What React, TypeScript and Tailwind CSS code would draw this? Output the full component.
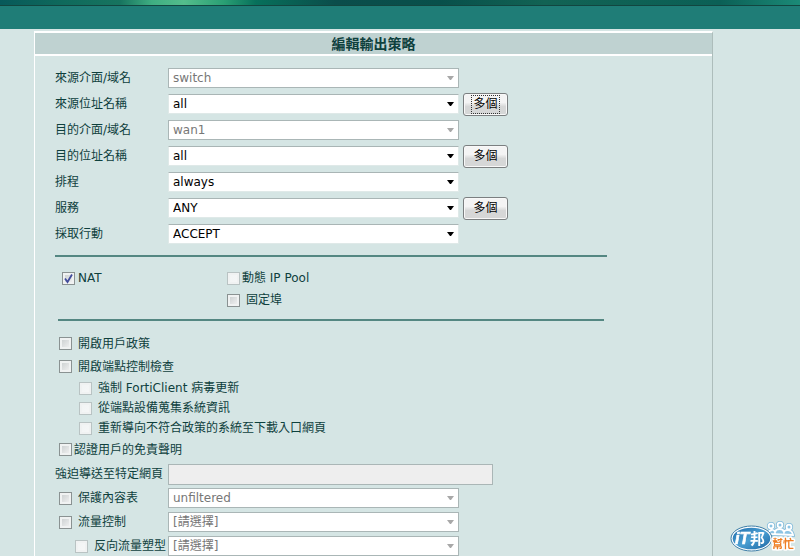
import { useId, useState, type ReactNode } from 'react'

type FieldProps = { label: string; value: string; disabled?: boolean; more?: boolean; focused?: boolean }

const FIELDS: FieldProps[] = [
  { label: '來源介面/域名', value: 'switch', disabled: true },
  { label: '來源位址名稱', value: 'all', more: true, focused: true },
  { label: '目的介面/域名', value: 'wan1', disabled: true },
  { label: '目的位址名稱', value: 'all', more: true },
  { label: '排程', value: 'always' },
  { label: '服務', value: 'ANY', more: true },
  { label: '採取行動', value: 'ACCEPT' },
]

const ENDPOINT_OPTIONS = ['強制 FortiClient 病毒更新', '從端點設備蒐集系統資訊', '重新導向不符合政策的系統至下載入口網頁']

function Select({ id, label, value, disabled }: { id?: string; label?: string; value: string; disabled?: boolean }) {
  return (
    <div className="relative w-[291px] shrink-0">
      <select
        id={id}
        aria-label={label}
        disabled={disabled}
        className="block h-5 w-full appearance-none border border-[#dfe9e8] border-t-[#a9b5b5] bg-white pl-1 leading-4 text-black opacity-100 disabled:border-[#aab6b6] disabled:text-[#777777]"
      >
        <option>{value}</option>
      </select>
      <svg
        viewBox="0 0 7 4"
        className={`pointer-events-none absolute top-2 right-[5px] h-1 w-[7px] ${disabled ? 'text-[#a8a8a8]' : 'text-black'}`}
      >
        <path d="M0 0h7L4 4H3z" fill="currentColor" />
      </svg>
    </div>
  )
}

function Field({ label, value, disabled, more, focused }: FieldProps) {
  const id = useId()
  return (
    <div className="flex h-[26px] items-center">
      <label htmlFor={id} className="w-[113px] shrink-0">{label}</label>
      <Select id={id} value={value} disabled={disabled} />
      {more && (
        <button
          type="button"
          className="ml-1 flex h-[23px] w-[45px] items-center justify-center rounded-[3px] border border-[#7b7f80] bg-linear-to-b from-[#f4f4f4] from-40% to-[#d6d7d7] to-60% text-black shadow-[inset_0_0_0_1px_#f8f8f8]"
        >
          <span className={focused ? 'outline outline-dotted outline-[#333333] h-[17px] px-px leading-4' : 'leading-4'}>多個</span>
        </button>
      )}
    </div>
  )
}

function Check({ children, defaultChecked = false, disabled, gap = 'gap-[6px]' }: {
  children: ReactNode; defaultChecked?: boolean; disabled?: boolean; gap?: string
}) {
  const [on, setOn] = useState(defaultChecked)
  return (
    <label className={`flex items-center whitespace-nowrap ${gap}`}>
      <span className="relative size-[13px] shrink-0">
        <input
          type="checkbox"
          checked={on}
          disabled={disabled}
          onChange={e => setOn(e.target.checked)}
          className="block size-[13px] appearance-none border border-[#8a9292] bg-linear-to-br from-[#c6cbcc] to-[#f6f6f6] shadow-[inset_0_0_0_2px_#f0f2f2] disabled:border-[#b9c3c3] disabled:from-[#f1f4f4] disabled:to-[#f6f7f7]"
        />
        {on && (
          <svg viewBox="0 0 13 13" className="pointer-events-none absolute inset-0 size-[13px]">
            <path d="M3 6.5 5.5 10 10 2.5" fill="none" stroke="#414c9c" strokeWidth="1.8" />
          </svg>
        )}
      </span>
      <span>{children}</span>
    </label>
  )
}

function Logo() {
  return (
    <svg viewBox="0 0 72 36" className="fixed right-0 bottom-0 h-9 w-[72px]" role="img" aria-label="iT邦幫忙">
      <defs>
        <linearGradient id="oval" x1="0" y1="0" x2="1" y2="1">
          <stop offset="0" stopColor="#1f6cab" />
          <stop offset="0.5" stopColor="#4a9fd3" />
          <stop offset="1" stopColor="#1d67a3" />
        </linearGradient>
      </defs>
      {/* three people behind the badge */}
      <g stroke="#7db8da" strokeWidth="3.4" fill="#7db8da">
        <circle cx="43" cy="6" r="2.4" />
        <circle cx="52" cy="5" r="2.4" />
        <circle cx="61" cy="7" r="2.4" />
        <path d="M40 14c1-5 6-5 7-2 1-4 8-4 9 0 1-3 8-3 9 3z" />
      </g>
      <g stroke="#fff" strokeWidth="1.8" fill="#8cc4e4">
        <path d="M40 14c1-5 6-5 7-2 1-4 8-4 9 0 1-3 8-3 9 3z" />
        <circle cx="43" cy="6" r="2.4" />
        <circle cx="52" cy="5" r="2.4" />
        <circle cx="61" cy="7" r="2.4" />
      </g>
      <ellipse cx="23.5" cy="18.5" rx="20.5" ry="12.5" fill="#fff" stroke="#3c7ca6" strokeWidth="1" />
      <ellipse cx="23.5" cy="18.5" rx="18.8" ry="10.8" fill="url(#oval)" />
      <text x="7" y="24" fill="#fff" stroke="#fff" strokeWidth="0.6" fontSize="16" fontWeight="700" fontStyle="italic" fontFamily="'Liberation Sans', sans-serif">iT</text>
      <text x="22" y="24" fill="#fff" fontSize="15" fontWeight="700" fontFamily="'Noto Sans CJK TC', sans-serif">邦</text>
      <text x="44" y="28" fill="#ee7d22" stroke="#fff" strokeWidth="3" strokeLinejoin="round" paintOrder="stroke" fontSize="11" fontWeight="700" fontFamily="'Noto Sans CJK TC', sans-serif">幫忙</text>
    </svg>
  )
}

export default function App() {
  const redirectId = useId()
  return (
    <div className="flex h-screen flex-col overflow-hidden bg-[#d5e5e4] font-['DejaVu_Sans','Noto_Sans_CJK_TC',sans-serif] text-[12px] leading-4 text-[#0e403d]">
      <header className="shrink-0">
        <div className="h-[6px] border-b border-[#124640] bg-[linear-gradient(90deg,#07595a,#0f6a5c_8%,#17745f_15%,#3fae82_19%,#54bd8c_23%,#2a9f74_28%,#07705b_32%,#0b4d4b_42%,#08504b_55%,#126354_68%,#0b6056_90%,#1b8a77)]" />
        <div className="h-[23px] bg-[#1f7d77]" />
      </header>

      <main className="mt-[2px] mr-[87px] ml-[34px] flex-1 border-t-2 border-r border-l border-t-white border-r-[#adbdbb] border-l-white">
        <h1 className="flex h-[23px] items-center justify-center border-b-2 border-white bg-[#bfd2d1] text-[14px] font-bold">編輯輸出策略</h1>

        <form className="pt-[9px] pl-5" onSubmit={e => e.preventDefault()}>
          {FIELDS.map(f => <Field key={f.label} {...f} />)}

          <hr className="mt-2 w-[552px] border-t-2 border-[#548782]" />

          <div className="grid grid-cols-[165px_1fr] gap-y-[6px] pt-[13px] pb-[11px] pl-[7px]">
            <Check defaultChecked gap="gap-[3px]">NAT</Check>
            <Check disabled gap="gap-[2px]">動態 IP Pool</Check>
            <div className="col-start-2"><Check>固定埠</Check></div>
          </div>

          <hr className="ml-[3px] w-[546px] border-t-2 border-[#548782]" />

          <div className="pt-[11px] pb-px pl-1">
            <div className="flex h-[23px] items-center"><Check>開啟用戶政策</Check></div>
            <div className="flex h-[23px] items-center"><Check>開啟端點控制檢查</Check></div>
            <div className="pl-5">
              {ENDPOINT_OPTIONS.map(o => (
                <div key={o} className="flex h-5 items-center"><Check disabled>{o}</Check></div>
              ))}
            </div>
            <div className="flex h-[23px] items-center"><Check gap="gap-[2px]">認證用戶的免責聲明</Check></div>
          </div>

          <div className="flex h-6 items-center">
            <label htmlFor={redirectId} className="w-[113px] shrink-0 whitespace-nowrap">強迫導送至特定網頁</label>
            <input id={redirectId} type="text" disabled className="h-[21px] w-[325px] border border-[#aab6b6] bg-[#eeeeee] px-1" />
          </div>
          <div className="flex h-6 items-center">
            <div className="w-[113px] shrink-0 pl-1"><Check>保護內容表</Check></div>
            <Select label="保護內容表" value="unfiltered" disabled />
          </div>
          <div className="flex h-6 items-center">
            <div className="w-[113px] shrink-0 pl-1"><Check>流量控制</Check></div>
            <Select label="流量控制" value="[請選擇]" disabled />
          </div>
          <div className="flex h-6 items-center">
            <div className="w-[113px] shrink-0 pl-5"><Check disabled>反向流量塑型</Check></div>
            <Select label="反向流量塑型" value="[請選擇]" disabled />
          </div>
        </form>
      </main>
      <Logo />
    </div>
  )
}
